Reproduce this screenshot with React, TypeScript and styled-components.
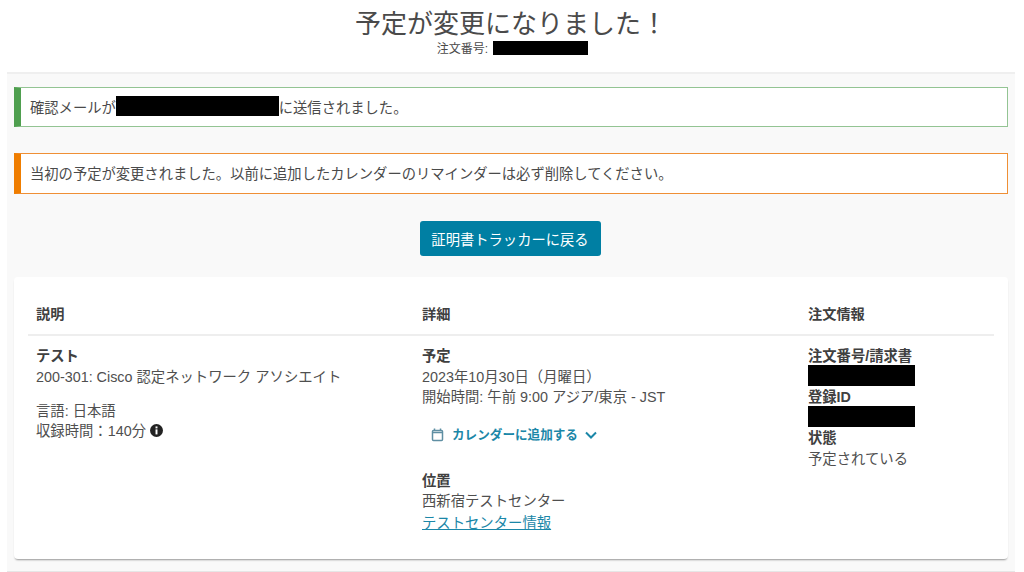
import React from "react";
import styled, { createGlobalStyle } from "styled-components";

const Global = createGlobalStyle`
  html, body { margin: 0; padding: 0; background: #fff; }
  body { font-family: "Liberation Sans", Arial, "Noto Sans CJK JP", sans-serif; color: #4f4f4f; }
`;

const Page = styled.div`
  width: 1024px;
  height: 572px;
  overflow: hidden;
  display: flex;
  flex-direction: column;
  align-items: center;
`;

const Header = styled.header`
  width: 1008px;
  height: 72px;
  margin-left: -2px;
  display: flex;
  flex-direction: column;
  align-items: center;
  flex: none;
  box-sizing: border-box;
`;

const Title = styled.h1`
  margin: 8px 0 0;
  font-size: 26px;
  line-height: 32px;
  font-weight: 400;
  color: #4a4a4a;
`;

const OrderLine = styled.div`
  display: flex;
  align-items: center;
  font-size: 12px;
  line-height: 14px;
  margin-top: -1px;
  margin-left: 3px;
  gap: 5px;
  color: #4a4a4a;
`;

const OrderCaption = styled.span`
  padding-top: 3px;
`;

const Redact = styled.span<{ $w: number; $h: number }>`
  display: inline-block;
  flex: none;
  width: ${(p) => p.$w}px;
  height: ${(p) => p.$h}px;
  background: #000;
  vertical-align: middle;
`;

const Main = styled.main`
  width: 1008px;
  height: 500px;
  margin-left: -2px;
  box-sizing: border-box;
  flex: none;
  background: #f9f9f9;
  border-top: 2px solid #efefef;
  border-bottom: 1px solid #e6e6e6;
  padding: 13px 7px 0;
  display: flex;
  flex-direction: column;
`;

const Alert = styled.div<{ $accent: string; $edge: string; $gap: number; $h: number }>`
  height: ${(p) => p.$h}px;
  margin-top: ${(p) => p.$gap}px;
  box-sizing: border-box;
  background: #fff;
  border: 1px solid ${(p) => p.$edge};
  border-left: 7px solid ${(p) => p.$accent};
  padding: 0 0 2px 9px;
  display: flex;
  align-items: center;
  font-size: 14.3px;
  color: #4a4a4a;
`;

const Actions = styled.div`
  display: flex;
  justify-content: center;
  margin-top: 27px;
  padding-right: 2px;
`;

const BackButton = styled.button`
  width: 181px;
  height: 35px;
  border: none;
  border-radius: 3px;
  background: #007fa3;
  color: #fff;
  font: inherit;
  font-size: 14.3px;
  padding: 0;
`;

const Card = styled.section`
  margin-top: 21px;
  height: 282px;
  box-sizing: border-box;
  background: #fff;
  border-radius: 4px;
  box-shadow: 0 2px 2px -1px rgba(0, 0, 0, 0.4);
  padding: 24px 14px 0;
`;

const Grid = styled.div`
  display: grid;
  grid-template-columns: 386px 386px 1fr;
`;

const HeadCell = styled.div`
  padding: 0 8px;
  height: 33px;
  border-bottom: 2px solid #eeeeee;
  font-size: 14.2px;
  line-height: 26px;
  font-weight: 700;
  color: #404040;
`;

const Cell = styled.div`
  padding: 10px 8px 0;
  font-size: 14.35px;
  line-height: 20px;
  color: #4f4f4f;
`;

const Label = styled.div`
  font-size: 14.3px;
  font-weight: 700;
  line-height: 21px;
  color: #404040;
`;

const Para = styled.div`
  margin-top: 14px;
`;

const InfoIcon = styled.svg`
  width: 13px;
  height: 13px;
  vertical-align: -1px;
`;

const CalendarAction = styled.div`
  display: flex;
  align-items: center;
  height: 20px;
  margin: 18px 0 26px 9px;
  gap: 7px;
  font-size: 12.6px;
  font-weight: 700;
  color: #1b87a8;
`;

const CalendarLabel = styled.span`
  margin-left: 1px;
`;

const Link = styled.a`
  color: #1b87a8;
  text-decoration: underline;
  display: block;
  line-height: 22px;
  margin-top: 1px;
`;

const LocationName = styled.div`
  margin-top: -1px;
`;

const OrderBlock = styled.div`
  height: 22px;
  margin-top: -2px;
  line-height: 0;
`;

export default function App() {
  return (
    <>
      <Global />
      <Page>
        <Header>
          <Title>予定が変更になりました！</Title>
          <OrderLine>
            <OrderCaption>注文番号:</OrderCaption>
            <Redact $w={95} $h={14} />
          </OrderLine>
        </Header>
        <Main>
          <Alert $accent="#4f9f4f" $edge="#93c493" $gap={0} $h={40}>
            確認メールが<Redact $w={163} $h={20} />に送信されました。
          </Alert>
          <Alert $accent="#ef7d00" $edge="#ef8f35" $gap={26} $h={41}>
            当初の予定が変更されました。以前に追加したカレンダーのリマインダーは必ず削除してください。
          </Alert>
          <Actions>
            <BackButton>証明書トラッカーに戻る</BackButton>
          </Actions>
          <Card>
            <Grid>
              <HeadCell>説明</HeadCell>
              <HeadCell>詳細</HeadCell>
              <HeadCell>注文情報</HeadCell>
              <Cell>
                <Label>テスト</Label>
                <div>200-301: Cisco 認定ネットワーク アソシエイト</div>
                <Para>言語: 日本語</Para>
                <div>
                  収録時間：140分{" "}
                  <InfoIcon viewBox="0 0 16 16">
                    <circle cx="8" cy="8" r="8" fill="#222" />
                    <rect x="6.8" y="3" width="2.4" height="2.4" fill="#fff" />
                    <rect x="6.8" y="6.6" width="2.4" height="6.2" fill="#fff" />
                  </InfoIcon>
                </div>
              </Cell>
              <Cell>
                <Label>予定</Label>
                <div>2023年10月30日（月曜日）</div>
                <div>開始時間: 午前 9:00 アジア/東京 - JST</div>
                <CalendarAction>
                  <svg width="13" height="14" viewBox="0 0 13 14" fill="none" stroke="#5f8fa3" strokeWidth="1.5">
                    <rect x="1.5" y="2.5" width="10" height="10" rx="1" />
                    <path d="M1.5 4.5h10M3.5 0.5v2M9.5 0.5v2" />
                  </svg>
                  <CalendarLabel>カレンダーに追加する</CalendarLabel>
                  <svg width="12" height="8" viewBox="0 0 12 8" fill="none" stroke="#1b87a8" strokeWidth="2">
                    <path d="M1 1.5l5 5 5-5" />
                  </svg>
                </CalendarAction>
                <Label>位置</Label>
                <LocationName>西新宿テストセンター</LocationName>
                <Link href="#">テストセンター情報</Link>
              </Cell>
              <Cell>
                <Label>注文番号/請求書</Label>
                <OrderBlock>
                  <Redact $w={107} $h={21} />
                </OrderBlock>
                <Label>登録ID</Label>
                <OrderBlock>
                  <Redact $w={107} $h={21} />
                </OrderBlock>
                <Label>状態</Label>
                <div>予定されている</div>
              </Cell>
            </Grid>
          </Card>
        </Main>
      </Page>
    </>
  );
}
